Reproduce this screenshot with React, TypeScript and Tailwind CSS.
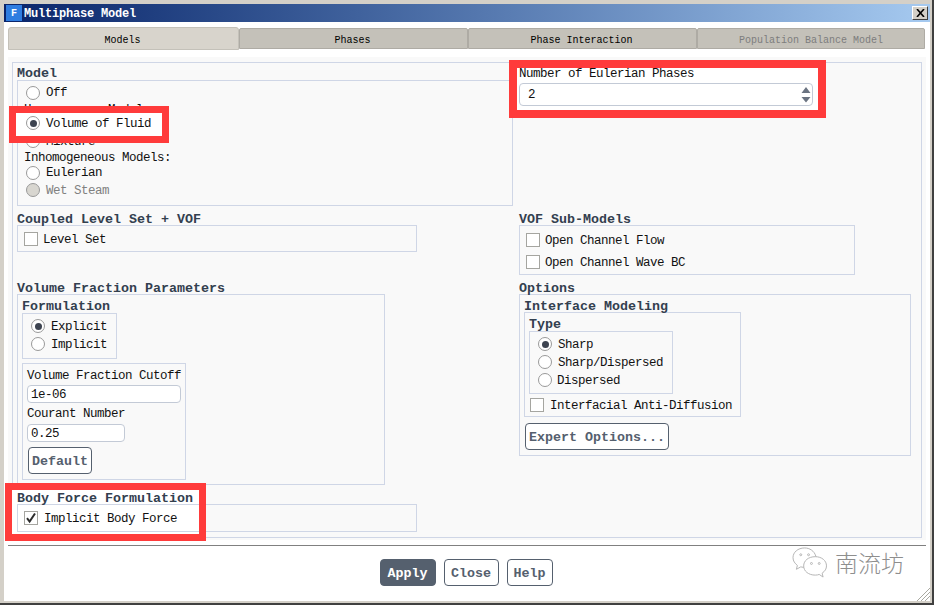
import React from "react";

const body = "text-[12.5px] tracking-[-0.5px] text-[#111] leading-none whitespace-pre pt-[2px]";
const bold = "text-[13.33px] font-bold text-[#33404f] leading-none whitespace-pre";

function Radio({ label, on, disabled, h, dim, ml = "ml-[6px]" }: { label: string; on?: boolean; disabled?: boolean; h: string; dim?: boolean; ml?: string }) {
  return (
    <div className={`flex items-center ${h}`}>
      <span className={`w-[14px] h-[14px] rounded-full border border-[#999] flex items-center justify-center shrink-0 ${disabled ? "bg-[#d8d6d0]" : "bg-white"}`}>
        {on && <span className="w-[7px] h-[7px] rounded-full bg-[#3d4350]" />}
      </span>
      <span className={`${body} ${ml} ${dim ? "text-[#808080]" : ""}`}>{label}</span>
    </div>
  );
}

function Check({ label, on, h, ml = "ml-[5px]" }: { label: string; on?: boolean; h: string; ml?: string }) {
  return (
    <div className={`flex items-center ${h}`}>
      <span className="w-[14px] h-[14px] border border-[#a5a5a0] bg-white flex items-center justify-center shrink-0">
        {on && (
          <svg width="12" height="12" viewBox="0 0 12 12">
            <path d="M2 6.2 L4.6 9.5 L10 1.5" fill="none" stroke="#2c2c2c" strokeWidth="2" />
          </svg>
        )}
      </span>
      <span className={`${body} ${ml}`}>{label}</span>
    </div>
  );
}

function Title({ children, h = "h-[14px]", low }: { children: React.ReactNode; h?: string; low?: boolean }) {
  return <div className={`${bold} ${h} flex items-center ${low ? "pt-[4px]" : "pt-[2px]"}`}>{children}</div>;
}

function Btn({ children, w, primary, h = "h-[27px]" }: { children: React.ReactNode; w: string; primary?: boolean; h?: string }) {
  return (
    <div className={`${w} ${h} rounded-[4px] border border-[#55606e] flex items-center justify-center text-[13.33px] font-bold leading-none whitespace-pre pt-[2px] ${primary ? "bg-[#55606e] text-white" : "bg-white text-[#55606e]"}`}>
      {children}
    </div>
  );
}

const box = "border border-[#cfd6e6]";

export default function App() {
  return (
    <div className="w-[934px] h-[605px] bg-[#d4d0c8] border-r-2 border-b-2 border-[#404040] pt-[4px] pl-[4px] pr-[2px] pb-[2px] overflow-hidden relative" style={{ fontFamily: '"Liberation Mono", monospace' }}>
      <div className="h-full bg-white flex flex-col">
        <div className="h-[18px] shrink-0 flex items-center bg-gradient-to-r from-[#0a246a] to-[#a6caf0]">
          <div className="w-[16px] h-[16px] ml-[2px] bg-[#2f7de0] flex items-center justify-center text-[10px] font-bold text-white">F</div>
          <span className="ml-[2px] text-[12px] tracking-[-0.2px] font-bold text-white whitespace-pre pt-[2px] leading-none">Multiphase Model</span>
          <div className="ml-auto mr-[2px] w-[16px] h-[14px] bg-[#d4d0c8] border border-t-white border-l-white border-r-[#404040] border-b-[#404040] flex items-center justify-center">
            <svg width="9" height="8" viewBox="0 0 9 8"><path d="M1 0 L8 8 M8 0 L1 8" stroke="#000" strokeWidth="1.6" /></svg>
          </div>
        </div>

        <div className="flex items-end h-[28px] mx-[4px] shrink-0 text-[10px] leading-none text-black">
          <div className="w-[231px] h-[23px] bg-[#d8d4cc] border border-[#c4c1b9] rounded-t-[3px] flex items-center justify-center pt-[5px] pr-[2px]">Models</div>
          <div className="w-[229px] h-[21px] mb-[1px] bg-[#c4c1b9] border border-[#aeaba4] rounded-t-[2px] flex items-center justify-center pt-[5px] pr-[2px]">Phases</div>
          <div className="w-[229px] h-[21px] mb-[1px] bg-[#c4c1b9] border border-[#aeaba4] rounded-t-[2px] flex items-center justify-center pt-[5px] pr-[2px]">Phase Interaction</div>
          <div className="w-[228px] h-[21px] mb-[1px] bg-[#c4c1b9] border border-[#aeaba4] rounded-t-[2px] flex items-center justify-center text-[#7d7d7d] pt-[5px]">Population Balance Model</div>
        </div>

        <div className="mx-[4px] mt-[7px] h-[483px] bg-[#f9f9f9] px-[4px] pt-[5px] shrink-0">
          <div className={`${box} h-[476px] pl-[4px] pt-[3px] flex`}>
            {/* left column */}
            <div className="w-[502px] shrink-0">
              <Title>Model</Title>
              <div className={`${box} w-[496px] h-[126px] pl-[8px] pt-[3px]`}>
                <Radio label="Off" h="h-[17px]" />
                <div className="text-[12.5px] tracking-[-0.5px] text-[#111] leading-none whitespace-pre pt-[6px] h-[13px] flex items-center -ml-[2px]">Homogeneous Models:</div>
                <div className="relative h-[18px]">
                  <div className="absolute left-[-17px] top-[-8px] w-[160px] h-[37px] bg-white border-[7px] border-[#ff3b3b]" />
                  <div className="relative"><Radio label="Volume of Fluid" on h="h-[18px]" /></div>
                </div>
                <div className="h-[18px]"><Radio label="Mixture" h="h-[18px]" /></div>
                <div className={`${body} h-[14px] flex items-center -ml-[2px]`}>Inhomogeneous Models:</div>
                <Radio label="Eulerian" h="h-[17px]" />
                <Radio label="Wet Steam" disabled dim h="h-[18px]" />
              </div>

              <div className="mt-[5px]"><Title low>Coupled Level Set + VOF</Title></div>
              <div className={`${box} w-[400px] h-[27px] pl-[6px] pt-[1px] flex items-center`}>
                <Check label="Level Set" h="h-[20px]" />
              </div>

              <div className="mt-[28px]"><Title low>Volume Fraction Parameters</Title></div>
              <div className={`${box} w-[368px] h-[191px] pl-[4px] pt-[3px]`}>
                <Title h="h-[15px]">Formulation</Title>
                <div className={`${box} w-[95px] h-[46px] pl-[8px] pt-[3px]`}>
                  <Radio label="Explicit" on h="h-[18px]" />
                  <Radio label="Implicit" h="h-[18px]" />
                </div>
                <div className={`${box} mt-[4px] w-[164px] h-[117px] pl-[4px] pt-[1px]`}>
                  <div className={`${body} h-[20px] flex items-center`}>Volume Fraction Cutoff</div>
                  <div className={`${body} w-[154px] h-[18px] rounded-[4px] border border-[#c3cad6] bg-white flex items-center pl-[3px]`}>1e-06</div>
                  <div className={`${body} h-[21px] flex items-center`}>Courant Number</div>
                  <div className={`${body} w-[98px] h-[18px] rounded-[4px] border border-[#c3cad6] bg-white flex items-center pl-[3px]`}>0.25</div>
                  <div className="mt-[5px] ml-[1px]"><Btn w="w-[64px]">Default</Btn></div>
                </div>
              </div>

              <div className="relative mt-[5px]">
                <div className="absolute left-[-12px] top-[-7px] w-[201px] h-[58px] bg-white" />
                <div className="relative">
                  <Title low>Body Force Formulation</Title>
                  <div className={`${box} w-[400px] h-[28px] pl-[6px] flex items-center`}>
                    <Check label="Implicit Body Force" on h="h-[20px]" ml="ml-[6px]" />
                  </div>
                </div>
                <div className="absolute left-[-12px] top-[-7px] w-[201px] h-[58px] border-[7px] border-[#ff3b3b]" />
              </div>
            </div>

            {/* right column */}
            <div className="flex-1">
              <div className="relative w-[294px]">
                <div className="absolute left-[-10px] top-[-6px] w-[317px] h-[58px] bg-white border-[8px] border-[#ff3b3b]" />
                <div className="relative">
                  <div className={`${body} h-[14px] flex items-center`}>Number of Eulerian Phases</div>
                  <div className="mt-[3px] h-[23px] rounded-[4px] border border-[#c3cad6] bg-white flex items-center justify-between pl-[8px] pr-[1px]">
                    <span className={body}>2</span>
                    <svg width="10" height="19" viewBox="0 0 10 19">
                      <path d="M5 2 L9.500 8 L0.500 8 Z M0.500 12 L9.500 12 L5 17.500 Z" fill="#6b7482" />
                    </svg>
                  </div>
                </div>
              </div>

              <div className="mt-[105px]"><Title low>VOF Sub-Models</Title></div>
              <div className={`${box} w-[336px] h-[50px] pl-[6px] pt-[3px]`}>
                <Check label="Open Channel Flow" h="h-[22px]" />
                <Check label="Open Channel Wave BC" h="h-[22px]" />
              </div>

              <div className="mt-[5px]"><Title low>Options</Title></div>
              <div className={`${box} w-[392px] h-[162px] pl-[4px] pt-[3px]`}>
                <Title low>Interface Modeling</Title>
                <div className={`${box} w-[217px] h-[105px] pl-[4px] pt-[4px]`}>
                  <Title>Type</Title>
                  <div className={`${box} w-[144px] h-[63px] pl-[8px] pt-[3px]`}>
                    <Radio label="Sharp" on h="h-[18px]" />
                    <Radio label="Sharp/Dispersed" h="h-[18px]" />
                    <Radio label="Dispersed" h="h-[18px]" ml="ml-[5px]" />
                  </div>
                  <div className="ml-[1px]"><Check label="Interfacial Anti-Diffusion" h="h-[22px]" ml="ml-[6px]" /></div>
                </div>
                <div className="mt-[6px] ml-[1px]"><Btn w="w-[144px]">Expert Options...</Btn></div>
              </div>
            </div>
          </div>
        </div>

        <div className="mx-[4px] mt-[5px] h-px bg-[#808080] shrink-0" />

        <div className="flex-1 relative flex justify-center pt-[13px] pr-[2px] gap-[8px]">
          <Btn w="w-[56px]" primary>Apply</Btn>
          <Btn w="w-[55px]">Close</Btn>
          <Btn w="w-[46px]">Help</Btn>
          <div className="absolute right-[26px] top-0 flex items-center gap-[7px]">
            <svg width="37" height="33" viewBox="0 0 38 34" fill="#fff" stroke="#b4b4b4" strokeWidth="1">
              <path d="M14 2 C7 2 2 6.500 2 12 C2 15.500 4 18 6.500 20 L5.500 24 L10 21.500 C11.500 22 13 22 15 22 C24 22 27 16 25.500 10.500 C24 5 19 2 14 2 Z" />
              <path d="M25 11 C18 11 13 15 13 20.500 C13 26 18 30 25 30 C26.500 30 28 29.700 29 29.300 L33 32 L32 28 C35 26 36.500 23.500 36.500 20.500 C36.500 15 31.500 11 25 11 Z" />
              <circle cx="10" cy="9" r="1" />
              <circle cx="18" cy="9" r="1" />
              <circle cx="21" cy="18" r="1" />
              <circle cx="29" cy="18" r="1" />
            </svg>
            <span className="text-[23px] font-light leading-none text-[#8e8e8e]" style={{ fontFamily: '"Noto Sans CJK SC", sans-serif' }}>南流坊</span>
          </div>
          <svg className="absolute right-0 bottom-0" width="14" height="14" viewBox="0 0 14 14" stroke="#a8a8a0" strokeWidth="1">
            <path d="M14 1 L1 14 M14 5 L5 14 M14 9 L9 14" />
          </svg>
        </div>
      </div>
    </div>
  );
}
